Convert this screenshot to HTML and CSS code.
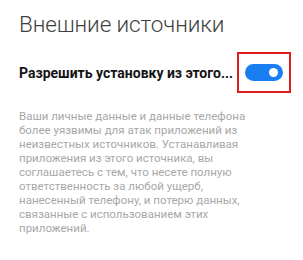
FILE: index.html
```html
<!DOCTYPE html>
<html lang="ru">
<head>
<meta charset="utf-8">
<link rel="stylesheet" href="styles.css">
</head>
<body>
<div class="page">
  <h1 class="title">Внешние источники</h1>
  <div class="row">
    <span class="label">Разрешить установку из этого...</span>
    <div class="highlight">
      <div class="toggle"><span class="knob"></span></div>
    </div>
  </div>
  <p class="desc">Ваши личные данные и данные телефона<br>более уязвимы для атак приложений из<br>неизвестных источников. Устанавливая<br>приложения из этого источника, вы<br>соглашаетесь с тем, что несете полную<br>ответственность за любой ущерб,<br>нанесенный телефону, и потерю данных,<br>связанные с использованием этих<br>приложений.</p>
</div>
</body>
</html>
```
FILE: styles.css
```css
html, body {
  margin: 0;
  padding: 0;
  background: #ffffff;
}
.page {
  width: 303px;
  height: 260px;
  overflow: hidden;
  font-family: Roboto, "Noto Sans", sans-serif;
}
.title {
  margin: 0;
  padding: 9px 0 0 19px;
  font-size: 22.5px;
  line-height: 30px;
  font-weight: 300;
  color: #3f3f3f;
  letter-spacing: -0.1px;
}
.row {
  display: flex;
  align-items: center;
  justify-content: space-between;
  padding: 13px 12px 0 19px;
}
.label {
  font-size: 14px;
  font-weight: 700;
  color: #141414;
}
.highlight {
  width: 50px;
  height: 37px;
  border: 2px solid #e01b1b;
  display: flex;
  align-items: center;
  justify-content: center;
}
.toggle {
  width: 38px;
  height: 17px;
  border-radius: 9px;
  background: #1a7ef2;
  display: flex;
  align-items: center;
  justify-content: flex-end;
  padding-right: 5px;
  box-sizing: border-box;
}
.knob {
  width: 9px;
  height: 9px;
  border-radius: 50%;
  background: #ffffff;
}
.desc {
  margin: 16px 0 0 0;
  padding: 0 19px;
  font-size: 11.5px;
  line-height: 14px;
  color: #a8a8a8;
}
```
